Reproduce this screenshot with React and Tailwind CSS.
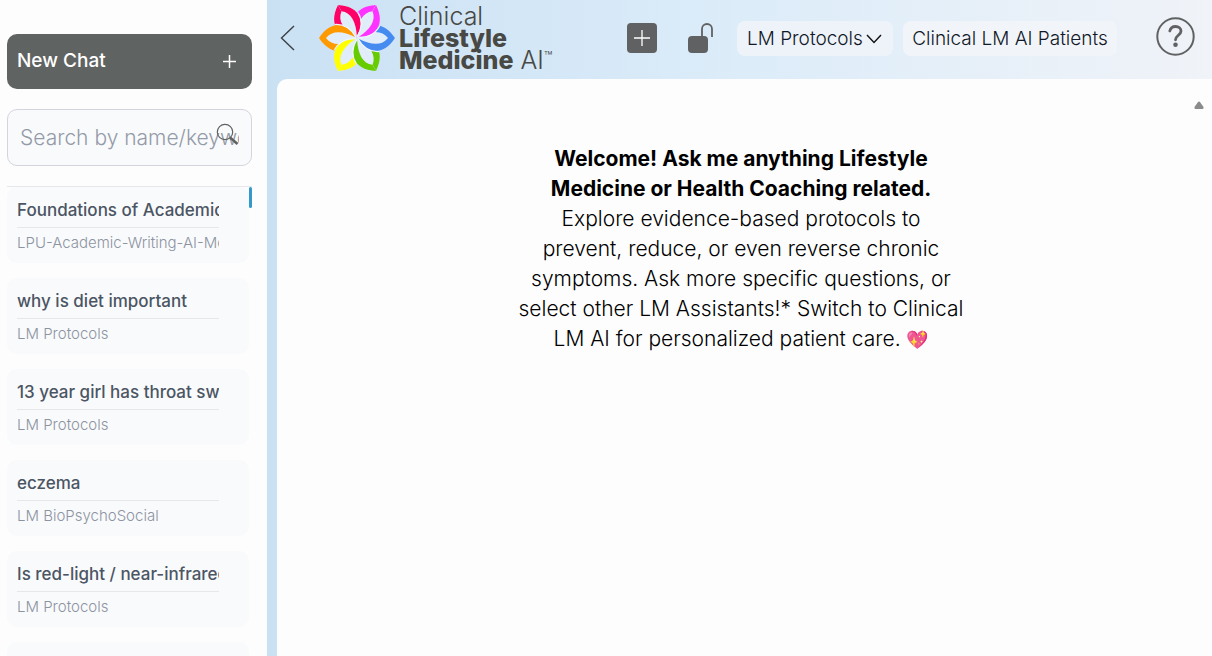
import React, { useState } from 'react';

const chats = [
  { title: 'Foundations of Academic Writing', assistant: 'LPU-Academic-Writing-AI-Mentor' },
  { title: 'why is diet important', assistant: 'LM Protocols' },
  { title: '13 year girl has throat swelling', assistant: 'LM Protocols' },
  { title: 'eczema', assistant: 'LM BioPsychoSocial' },
  { title: 'Is red-light / near-infrared safe', assistant: 'LM Protocols' },
  { title: 'sleep hygiene', assistant: 'LM Protocols' },
];

const petals = [
  { angle: 0, color: '#468cf0' },
  { angle: 60, color: '#66cc00' },
  { angle: 120, color: '#ffff00' },
  { angle: 180, color: '#ff9900' },
  { angle: 240, color: '#ff0066' },
  { angle: 300, color: '#ff33ff' },
];

function FlowerLogo() {
  return (
    <svg width="78" height="70" viewBox="-39 -35 78 70" aria-hidden="true">
      {/* Far side of every petal */}
      {petals.map((p) => (
        <g key={p.angle} transform={`rotate(${p.angle})`}>
          <path d="M0 0C8 -14 25 -20 38 0Z" fill="#e1edf9" />
          <path d="M0 0C8 -14 25 -20 38 0H31C25 -8 14 -8 0 0Z" fill={p.color} />
        </g>
      ))}
      {/* Near side, lying over the neighbour */}
      {petals.map((p) => (
        <g key={p.angle} transform={`rotate(${p.angle})`}>
          <path d="M0 0C8 14 25 20 38 0Z" fill="#e1edf9" />
          <path d="M2 1C8 14 25 20 38 0H31C25 8 14 7 2 1Z" fill={p.color} />
          <path d="M1 1C7 11 14 14 22 13.500" fill="none" stroke="#eef5fc" strokeWidth="1.2" />
        </g>
      ))}
    </svg>
  );
}

function Sidebar() {
  const [query, setQuery] = useState('');

  return (
    <aside className="flex w-[267px] shrink-0 flex-col bg-[#fdfdfd] pt-[34px] pr-[15px] pl-[7px]">
      <button type="button" className="flex h-[55px] shrink-0 items-center justify-between rounded-[10px] bg-[#5f6362] pr-4 pl-[10px] text-[19px] font-medium text-white">
        New Chat
        <svg width="13" height="13" viewBox="0 0 13 13" stroke="currentColor" strokeWidth="1.5" aria-hidden="true">
          <path d="M6.5 0V13M0 6.5H13" />
        </svg>
      </button>

      <div className="relative mt-5 shrink-0">
        <input
          type="text"
          aria-label="Search by name/keyword"
          placeholder="Search by name/keyword"
          value={query}
          onChange={(e) => setQuery(e.target.value)}
          className="h-[57px] w-full rounded-[10px] border border-[#d4d4de] bg-[#f9fafc] px-3 text-[21px] font-light text-gray-700 placeholder:text-[#949ba8]"
        />
        <svg className="absolute top-[14px] right-3 text-[#5f6362]" width="24" height="24" viewBox="0 0 24 24" fill="none" stroke="currentColor" aria-hidden="true">
          <circle cx="9" cy="9" r="7.7" strokeWidth="1.2" />
          <path d="M14 14.500L21.500 21" strokeWidth="2.600" />
        </svg>
      </div>

      <div className="mt-5 flex min-h-0 flex-1 overflow-hidden border-t border-gray-200">
        <ul className="flex min-w-0 flex-1 flex-col gap-[15px]">
          {chats.map((chat) => (
            <li key={chat.title} className="h-[76px] shrink-0 rounded-[10px] bg-[#f9fafc] pt-2 pr-[30px] pl-[10px]">
              <a href="#chat" className="block">
                <span className="block h-[33px] overflow-hidden border-b border-gray-200 text-[17px] leading-[30px] font-medium whitespace-nowrap text-[#4b5563]">
                  {chat.title}
                </span>
                <span className="block overflow-hidden text-[15px] leading-[30px] font-light whitespace-nowrap text-[#8d94a1]">
                  {chat.assistant}
                </span>
              </a>
            </li>
          ))}
        </ul>
        <div className="h-[21px] w-[3px] rounded-sm bg-[#3498cb]" />
      </div>
    </aside>
  );
}

function Header() {
  return (
    <header className="flex h-[79px] shrink-0 items-center pr-[17px] pb-[3px] pl-[13px]">
      <button type="button" aria-label="Hide sidebar" className="mr-[23px] text-[#3c4043]">
        <svg width="15" height="26" viewBox="0 0 15 26" fill="none" stroke="currentColor" strokeWidth="1.4">
          <path d="M14 1L1.500 13L14 25" />
        </svg>
      </button>
      <FlowerLogo />
      <h1 className="ml-[3px] text-[25px] leading-[22px] font-light whitespace-nowrap text-[#484844]">
        Clinical
        <br />
        <span className="font-extrabold">Lifestyle</span>
        <br />
        <span className="font-extrabold">Medicine</span> AI
        <sup className="text-[14px] leading-none">™</sup>
      </h1>

      <div className="ml-auto flex items-center">
        <button type="button" aria-label="New chat" className="flex size-[30px] items-center justify-center rounded-[4px] bg-[#606163] text-white">
          <svg width="16" height="16" viewBox="0 0 16 16" stroke="currentColor" strokeWidth="1.3">
            <path d="M8 0V16M0 8H16" />
          </svg>
        </button>
        <button type="button" aria-label="Unlock" className="mr-6 ml-[30px] text-[#606163]">
          <svg width="26" height="30" viewBox="0 0 26 30">
            <rect x="1" y="13" width="20" height="17" rx="4" fill="currentColor" />
            <path d="M15 13V6A5 5 0 0 1 25 6V14" fill="none" stroke="currentColor" strokeWidth="1.8" />
          </svg>
        </button>
        <div className="relative mr-[10px]">
          <select aria-label="Assistant" className="h-[35px] w-[156px] appearance-none rounded-lg bg-[#eef3fa] px-[10px] pt-0.5 text-[19px] font-light text-[#111827]">
            <option>LM Protocols</option>
            <option>LM BioPsychoSocial</option>
          </select>
          <svg className="pointer-events-none absolute top-[13px] right-[11px]" width="16" height="10" viewBox="0 0 16 10" fill="none" stroke="#111111" strokeWidth="1.4" aria-hidden="true">
            <path d="M1 1L8 8.500L15 1" />
          </svg>
        </div>
        <button type="button" className="h-[35px] w-[214px] rounded-lg bg-[#f1f5fa] pt-0.5 text-[19px] font-light whitespace-nowrap text-[#111827]">
          Clinical LM AI Patients
        </button>
        <button type="button" aria-label="Help" className="mb-1 ml-[39px] text-[#606163]">
          <svg width="39" height="39" viewBox="0 0 39 39" fill="none" stroke="currentColor">
            <circle cx="19.500" cy="19.500" r="18.200" strokeWidth="2" />
            <path d="M13.800 14C14.500 11 16.800 9.500 19.600 9.500C22.700 9.500 25 11.300 25 14C25 18 19.500 18.500 19.500 22.800" strokeWidth="2.800" strokeLinecap="round" />
            <circle cx="19.500" cy="27.800" r="2.300" fill="currentColor" stroke="none" />
          </svg>
        </button>
      </div>
    </header>
  );
}

function App() {
  return (
    <div className="flex h-screen overflow-hidden font-['Inter',sans-serif]">
      <Sidebar />
      <div className="flex min-w-0 flex-1 flex-col bg-linear-to-r from-[#cae1f4] via-[#dcecf9] to-[#f0f3f8]">
        <Header />
        <main className="relative ml-[10px] flex-1 rounded-tl-[10px] bg-[#fdfdfd] pt-[65px] pr-[7px]">
          <svg className="absolute top-[22px] right-2" width="10" height="8" viewBox="0 0 10 8" fill="#8b8b8b" aria-hidden="true">
            <path d="M4 1Q5 0 6 1L9.500 6Q10 8 8.500 8H1.500Q0 8 0.500 6Z" />
          </svg>
          {/* Welcome message */}
          <p className="mx-auto w-[460px] text-center text-[21px] leading-[30px] font-light text-black">
            <strong className="font-bold">
              Welcome! Ask me anything Lifestyle
              <br />
              Medicine or Health Coaching related.
            </strong>
            <br />
            Explore evidence-based protocols to
            <br />
            prevent, reduce, or even reverse chronic
            <br />
            symptoms. Ask more specific questions, or
            <br />
            select other LM Assistants!* Switch to Clinical
            <br />
            LM AI for personalized patient care.{' '}
            <span className="text-[18px]">💖</span>
          </p>
        </main>
      </div>
    </div>
  );
}

export default App;
